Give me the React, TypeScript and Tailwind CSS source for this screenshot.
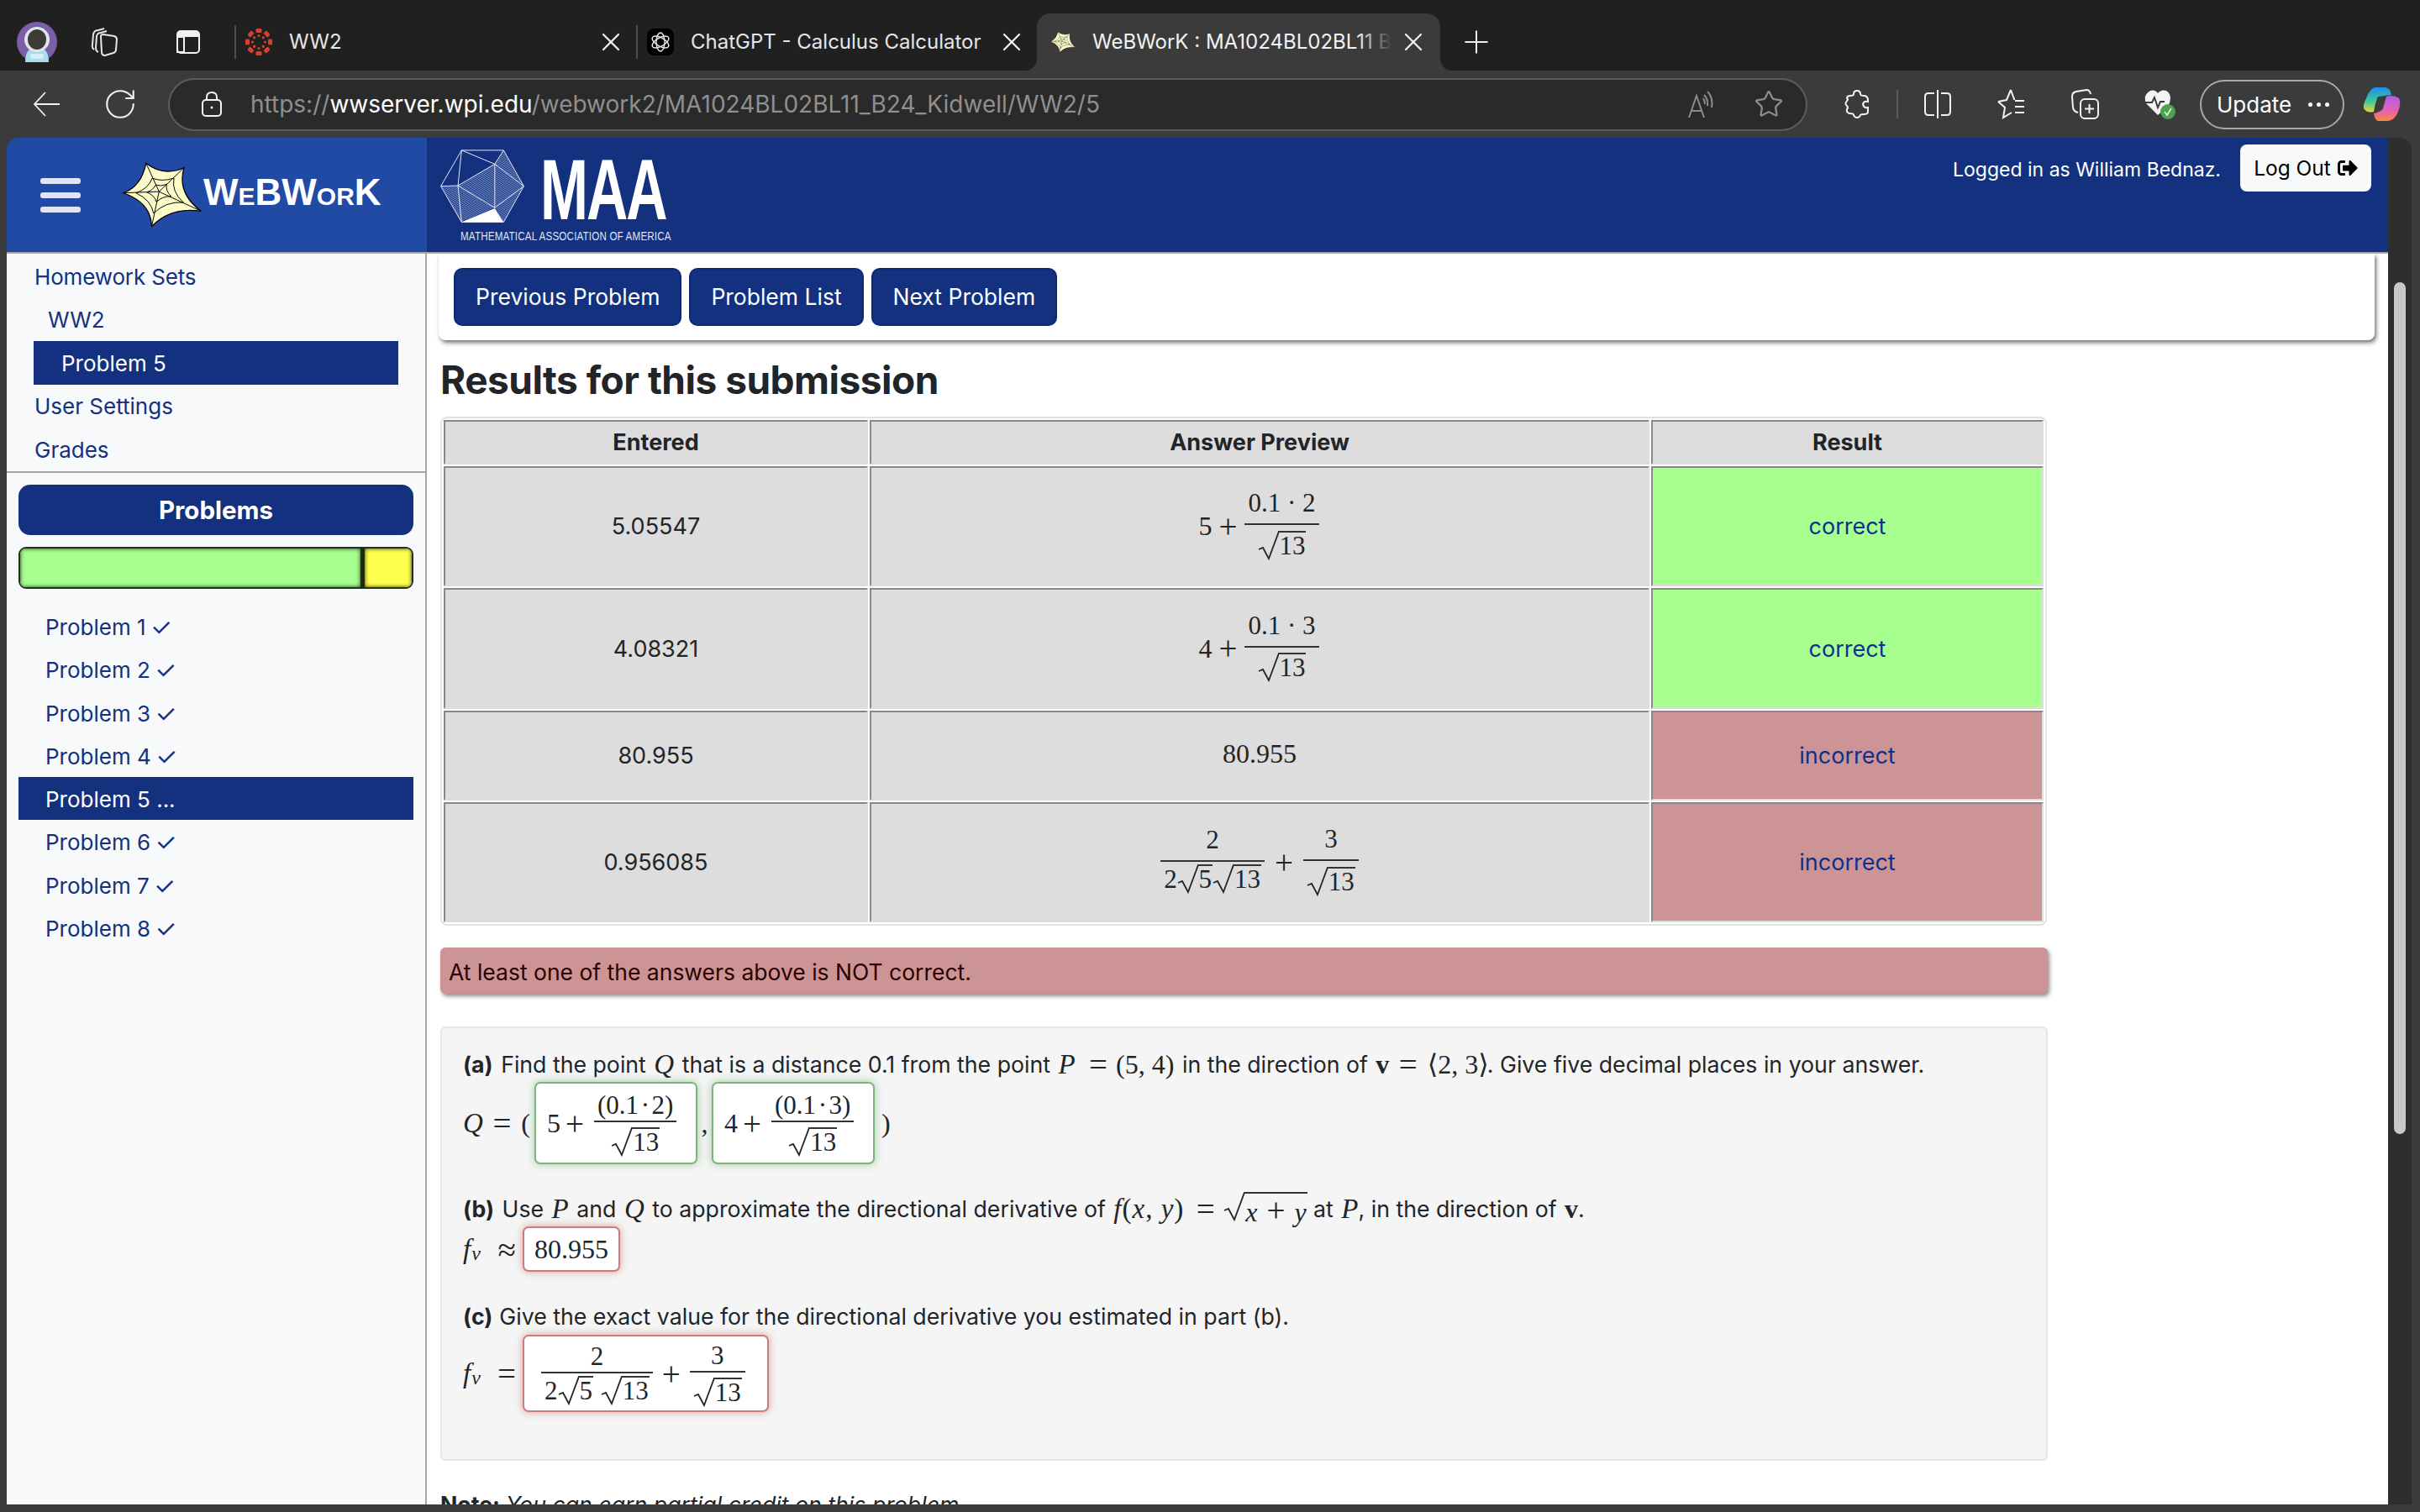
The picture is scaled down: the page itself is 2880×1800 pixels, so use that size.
import type { ReactNode } from "react"
import { Plus, RotateCw, Star, X } from "lucide-react"
import { FaSignOutAlt } from "react-icons/fa"

const BLUE = "text-[#13317f]"
const SERIF = "font-['Liberation_Serif','DejaVu_Serif',serif]"

function V({ children }: { children: ReactNode }) {
  return <span className={`${SERIF} italic text-[33px] leading-none`}>{children}</span>
}

function M({ children, className = "" }: { children: ReactNode; className?: string }) {
  return <span className={`${SERIF} text-[32px] leading-none whitespace-pre ${className}`}>{children}</span>
}

// + and = are wider in the math font of the page
function Op({ children, className = "" }: { children: ReactNode; className?: string }) {
  return <span className={`${SERIF} text-[39px] leading-none font-normal ${className}`}>{children}</span>
}

function Sqrt({ children, size = 31 }: { children: ReactNode; size?: number }) {
  const h = Math.round(size * 1.14)
  return (
    <span className="inline-flex items-start align-middle">
      <svg width={h * 0.74} height={h} viewBox="0 0 26 35" className="shrink-0" preserveAspectRatio="none">
        <path d="M1 22 L6 20 L13 33 L25 1 H26" fill="none" stroke="currentColor" strokeWidth="1.8" />
      </svg>
      <span className="border-t-[2px] border-[#333] leading-[32px] pr-[1px]">{children}</span>
    </span>
  )
}

function Frac({ top, bottom, loose = false }: { top: ReactNode; bottom: ReactNode; loose?: boolean }) {
  return (
    <span className={`inline-flex flex-col items-center align-middle ${SERIF} text-[31px]`}>
      <span className={`leading-[37px] whitespace-pre px-[4px] ${loose ? "pb-[6px]" : ""}`}>{top}</span>
      <span className="w-full border-t-[2px] border-[#333]" />
      <span className={`leading-[37px] whitespace-pre px-[4px] pt-[2px] ${loose ? "pb-[6px]" : ""}`}>{bottom}</span>
    </span>
  )
}

function AnswerBox({ ok, className, children }: { ok: boolean; className: string; children: ReactNode }) {
  const tone = ok
    ? "border-[#7db37d] shadow-[0_0_10px_rgba(70,160,70,0.5)]"
    : "border-[#c87c7c] shadow-[0_0_10px_rgba(190,70,70,0.5)]"
  return (
    <span className={`inline-flex items-center bg-white border-[2px] rounded-[7px] shrink-0 ${tone} ${className}`}>
      {children}
    </span>
  )
}

function Astronaut() {
  return (
    <svg width="48" height="48" viewBox="0 0 48 48" className="shrink-0">
      <circle cx="24" cy="24" r="24" fill="#7c5da8" />
      <path d="M10 48 Q10 30 24 30 Q38 30 38 48 Z" fill="#a9dcea" />
      <circle cx="24" cy="21" r="15" fill="#dfe7ea" />
      <ellipse cx="24" cy="21" rx="11" ry="12" fill="#3e3a36" />
      <rect x="16" y="38" width="16" height="6" rx="2" fill="#d5eef5" />
    </svg>
  )
}

function TabsIcon() {
  return (
    <svg width="33" height="34" viewBox="0 0 33 34" fill="none" stroke="#e6e6e6" strokeWidth="2" className="shrink-0">
      <path d="M4 26 Q1 24 2 20 L3 8 Q4 3 9 3 L16 1" />
      <path d="M9 29 Q6 28 6 24 L7 10 Q8 6 12 6 L19 4" />
      <path d="M12 10 Q12 8 15 8 L28 10 Q31 11 31 14 L30 26 Q30 29 27 30 L17 33 Q13 33 13 29 Z" />
    </svg>
  )
}

function VerticalTabsIcon() {
  return (
    <svg width="28" height="28" viewBox="0 0 28 28" className="shrink-0">
      <rect x="1" y="1" width="26" height="26" rx="4" fill="none" stroke="#f2f2f2" strokeWidth="2" />
      <path d="M1 5 Q1 1 5 1 H23 Q27 1 27 5 V8 H1 Z" fill="#f2f2f2" />
      <rect x="1" y="8" width="8" height="18" fill="none" stroke="#f2f2f2" strokeWidth="2" />
    </svg>
  )
}

function CanvasIcon() {
  const dots = [0, 45, 90, 135, 180, 225, 270, 315]
  return (
    <svg width="32" height="32" viewBox="-16 -16 32 32" className="shrink-0">
      {dots.map((a) => (
        <g key={a} transform={`rotate(${a})`}>
          <rect x="-3.5" y="-16" width="7" height="5" rx="1.5" fill="#d6402d" />
          <circle cx="0" cy="-7.5" r="1.6" fill="#d6402d" />
        </g>
      ))}
    </svg>
  )
}

function ChatGptIcon() {
  return (
    <svg width="32" height="32" viewBox="-16 -16 32 32" className="shrink-0">
      <rect x="-16" y="-16" width="32" height="32" rx="8" fill="#000" />
      {[0, 60, 120].map((a) => (
        <ellipse key={a} rx="5" ry="11" transform={`rotate(${a})`} fill="none" stroke="#e8e8e8" strokeWidth="1.4" />
      ))}
    </svg>
  )
}

function WebStar({ size = 97 }: { size?: number }) {
  return (
    <svg width={size} height={size * 0.825} viewBox="40 78 300 248" className="shrink-0">
      <path
        d="M48 195 Q115 170 132 85 Q195 135 272 102 Q245 195 335 262 Q225 245 153 318 Q150 230 48 195 Z"
        fill="#fdfcc8"
        stroke="#000"
        strokeWidth="4"
      />
      <g fill="none" stroke="#000" strokeWidth="3">
        <path d="M180 190 L132 85 M180 190 L272 102 M180 190 L335 262 M180 190 L153 318 M180 190 L48 195" />
        <path d="M155 140 Q190 155 235 140 Q225 190 270 230 Q205 225 160 270 Q150 220 95 195 Q140 180 155 140 Z" />
        <path d="M168 165 Q185 172 208 163 Q203 187 225 208 Q195 205 170 228 Q165 205 135 192 Q158 185 168 165 Z" />
      </g>
    </svg>
  )
}

function MaaMark() {
  return (
    <svg width="102" height="90" viewBox="40 38 310 270" className="shrink-0">
      <defs>
        <pattern id="hatch" width="5" height="5" patternUnits="userSpaceOnUse" patternTransform="rotate(25)">
          <rect width="5" height="5" fill="#13317f" />
          <rect width="5" height="2" fill="#8ea3d3" />
        </pattern>
      </defs>
      <path d="M107 170 L240 92 L345 172 L272 302 L240 250 Z" fill="url(#hatch)" />
      <path d="M45 172 L107 170 L240 250 L120 302 Z" fill="url(#hatch)" />
      <path d="M240 92 L272 42 L345 172 Z" fill="url(#hatch)" />
      <path d="M120 302 L240 252 L272 302 Z" fill="#fff" />
      <g fill="none" stroke="#e6ebf7" strokeWidth="3">
        <path d="M120 42 H272 L345 172 L272 302 H120 L45 172 Z" />
        <path d="M120 42 L240 92 L272 42 M240 92 L345 172 M240 92 L240 250 L345 172 M240 92 L107 170 L240 250 M120 42 L107 170 L45 172 M107 170 L120 302" />
      </g>
    </svg>
  )
}

function BackIcon() {
  return (
    <svg width="32" height="30" viewBox="0 0 32 30" fill="none" stroke="#f2f2f2" strokeWidth="1.8" className="shrink-0">
      <path d="M32 15 H2 M15 1 L2 15 L15 29" />
    </svg>
  )
}

function LockIcon() {
  return (
    <svg width="24" height="30" viewBox="0 0 24 30" fill="none" stroke="#f2f2f2" strokeWidth="2" className="shrink-0">
      <rect x="1" y="10" width="22" height="19" rx="4" />
      <path d="M6 10 V7 Q6 1 12 1 Q18 1 18 7 V10" />
      <circle cx="12" cy="19" r="1.5" fill="#f2f2f2" stroke="none" />
    </svg>
  )
}

function ReadAloudIcon() {
  return (
    <svg width="34" height="36" viewBox="0 0 34 36" fill="none" stroke="#8c8c8c" strokeWidth="2" className="shrink-0">
      <path d="M2 34 L11 8 L20 34 M5 26 H17" />
      <path d="M20 7 Q25 12 24 20 M24 3 Q31 10 29 22 M19 11 Q21 14 21 18" />
    </svg>
  )
}

function PuzzleIcon() {
  return (
    <svg width="30" height="34" viewBox="0 0 30 34" fill="none" stroke="#f2f2f2" strokeWidth="2" className="shrink-0">
      <path d="M11 5 Q11 1 15 1 Q19 1 19 5 Q19 7 24 7 Q28 8 28 12 V14 Q23 13 22 17 Q23 22 28 21 V26 Q28 29 23 29 Q19 29 19 30 Q18 33 15 33 Q12 33 11 30 Q11 28 6 28 Q2 27 3 23 Q5 21 3 19 Q0 17 3 13 Q5 11 3 10 Q3 7 7 7 Q11 7 11 5 Z" />
    </svg>
  )
}

function SplitIcon() {
  return (
    <svg width="32" height="36" viewBox="0 0 32 36" fill="none" stroke="#f2f2f2" strokeWidth="2" className="shrink-0">
      <path d="M16 1 V35" />
      <path d="M12 5 H5 Q1 5 1 9 V27 Q1 31 5 31 H12 M20 5 H27 Q31 5 31 9 V27 Q31 31 27 31 H20" />
    </svg>
  )
}

function FavoritesIcon() {
  return (
    <svg width="34" height="36" viewBox="0 0 34 36" fill="none" stroke="#f2f2f2" strokeWidth="2" className="shrink-0">
      <path d="M16 1 L20 12 H21 M1 15 L11 13 L16 1 M1 15 L9 22 L7 34 L17 28" />
      <path d="M21 14 H32 M21 21 H32 M21 28 H32" />
    </svg>
  )
}

function CollectionsIcon() {
  return (
    <svg width="34" height="36" viewBox="0 0 34 36" fill="none" stroke="#f2f2f2" strokeWidth="2" className="shrink-0">
      <path d="M8 28 Q3 27 2 22 L1 9 Q1 4 6 3 L18 1 Q22 1 23 6" />
      <rect x="11" y="12" width="21" height="23" rx="5" />
      <path d="M21.5 18 V29 M16 23.5 H27" />
    </svg>
  )
}

function HealthIcon() {
  return (
    <svg width="38" height="38" viewBox="0 0 38 38" className="shrink-0">
      <path d="M17 32 L3 18 Q-1 8 8 3 Q14 1 17 6 Q21 1 27 3 Q35 8 30 20 Z" fill="#f4f4f4" />
      <path d="M0 17 H10 L13 11 L17 23 L20 16 H25" fill="none" stroke="#3b3b3b" strokeWidth="2" />
      <circle cx="29" cy="28" r="9" fill="#4ea24e" />
      <path d="M25 28 L28 32 L33 24" fill="none" stroke="#dff3df" strokeWidth="1.6" />
    </svg>
  )
}

function CopilotIcon() {
  return (
    <svg width="46" height="42" viewBox="0 0 46 42" className="shrink-0">
      <defs>
        <linearGradient id="cpa" x1="0" y1="0" x2="0" y2="1">
          <stop offset="0" stopColor="#1f8fe8" />
          <stop offset="0.55" stopColor="#38c8a0" />
          <stop offset="1" stopColor="#f4d23c" />
        </linearGradient>
        <linearGradient id="cpb" x1="0" y1="0" x2="0" y2="1">
          <stop offset="0" stopColor="#b060e8" />
          <stop offset="0.6" stopColor="#e860b0" />
          <stop offset="1" stopColor="#f58a3c" />
        </linearGradient>
      </defs>
      <path d="M14 1 H27 Q33 2 34 10 L18 12 Q15 18 13 30 Q5 32 1 26 Q0 22 4 14 Q8 3 14 1 Z" fill="url(#cpa)" />
      <path d="M28 12 Q36 9 43 14 Q46 20 42 30 Q38 40 30 41 H18 Q14 40 13 32 Q22 30 24 26 Q26 18 28 12 Z" fill="url(#cpb)" />
    </svg>
  )
}

function BrowserTabs() {
  return (
    <div className="h-[84px] bg-[#202020] flex items-center pl-[20px] pt-[16px] shrink-0">
      <Astronaut />
      <div className="ml-[40px]"><TabsIcon /></div>
      <div className="ml-[69px]"><VerticalTabsIcon /></div>
      <div className="ml-[41px] w-[2px] h-[40px] bg-[#4e4e4e]" />
      <div className="w-[476px] flex items-center pl-[11px] pr-[12px]">
        <CanvasIcon />
        <span className="ml-[20px] text-[24px] text-[#e6e6e6]">WW2</span>
        <X className="ml-auto text-[#eee]" size={36} strokeWidth={1.5} />
      </div>
      <div className="w-[2px] h-[40px] bg-[#4e4e4e]" />
      <div className="w-[475px] flex items-center pl-[11px] pr-[12px]">
        <ChatGptIcon />
        <span className="ml-[20px] text-[24px] text-[#e6e6e6] whitespace-nowrap">ChatGPT - Calculus Calculator</span>
        <X className="ml-auto text-[#eee]" size={36} strokeWidth={1.5} />
      </div>
      <div className="relative w-[480px] h-[68px] self-end bg-[#3b3b3b] rounded-t-[16px] flex items-center pl-[15px] pr-[14px]">
        <span className="absolute left-[-14px] bottom-0 w-[14px] h-[14px] bg-[#3b3b3b]">
          <span className="block w-full h-full bg-[#202020] rounded-br-[14px]" />
        </span>
        <span className="absolute right-[-14px] bottom-0 w-[14px] h-[14px] bg-[#3b3b3b]">
          <span className="block w-full h-full bg-[#202020] rounded-bl-[14px]" />
        </span>
        <WebStar size={32} />
        <span className="relative ml-[19px] w-[356px] overflow-hidden whitespace-nowrap text-[24px] text-[#f2f2f2]">
          WeBWorK : MA1024BL02BL11 B24 Kidwell : WW2 : 5
          <span className="absolute right-0 top-0 bottom-0 w-[40px] bg-linear-to-r from-transparent to-[#3b3b3b]" />
        </span>
        <X className="ml-auto text-[#eee]" size={36} strokeWidth={1.5} />
      </div>
      <Plus className="ml-[21px] text-[#eee]" size={44} strokeWidth={1.1} />
    </div>
  )
}

function ToolSlot({ children }: { children: ReactNode }) {
  return <div className="w-[88px] flex justify-center items-center shrink-0">{children}</div>
}

function BrowserToolbar() {
  return (
    <div className="h-[80px] bg-[#3b3b3b] flex items-center pl-[39px] shrink-0">
      <BackIcon />
      <RotateCw className="ml-[51px] text-[#f2f2f2]" size={42} strokeWidth={1.2} />
      <div className="ml-[36px] w-[1951px] h-[63px] rounded-full bg-[#2a2a2a] border-[2px] border-[#5c5c5c] flex items-center pl-[38px] pr-[26px]">
        <LockIcon />
        <span className="ml-[34px] text-[28px] text-[#8f8f8f] whitespace-nowrap">
          https://<span className="text-white">wwserver.wpi.edu</span>/webwork2/MA1024BL02BL11_B24_Kidwell/WW2/5
        </span>
        <div className="ml-auto flex items-center gap-[45px]">
          <ReadAloudIcon />
          <Star className="text-[#8c8c8c]" size={36} strokeWidth={1.5} />
        </div>
      </div>
      <div className="ml-[15px] flex items-center">
        <ToolSlot><PuzzleIcon /></ToolSlot>
        <div className="w-[2px] h-[34px] ml-[3px] mr-[3px] bg-[#5c5c5c]" />
        <ToolSlot><SplitIcon /></ToolSlot>
        <ToolSlot><FavoritesIcon /></ToolSlot>
        <ToolSlot><CollectionsIcon /></ToolSlot>
        <ToolSlot><HealthIcon /></ToolSlot>
        <div className="ml-[4px] w-[172px] h-[59px] rounded-full border-[2px] border-[#a8a8a8] flex items-center pl-[18px] text-[26px] text-white">
          Update
          <span className="ml-[20px] flex gap-[5px]">
            <i className="w-[5px] h-[5px] rounded-full bg-white" />
            <i className="w-[5px] h-[5px] rounded-full bg-white" />
            <i className="w-[5px] h-[5px] rounded-full bg-white" />
          </span>
        </div>
        <div className="ml-[22px]"><CopilotIcon /></div>
      </div>
    </div>
  )
}

function PageHeader() {
  return (
    <header className="h-[138px] flex shrink-0 border-b-[2px] border-[#a6a6a6]">
      <div className="w-[500px] bg-[#214aa5] rounded-tl-[14px] flex items-center pl-[40px] shrink-0">
        <div className="flex flex-col gap-[10px]">
          <span className="block w-[48px] h-[7px] rounded-[3px] bg-[#dfe5f5]" />
          <span className="block w-[48px] h-[7px] rounded-[3px] bg-[#dfe5f5]" />
          <span className="block w-[48px] h-[7px] rounded-[3px] bg-[#dfe5f5]" />
        </div>
        <div className="ml-[48px]"><WebStar /></div>
        <span className="ml-[1px] mb-[6px] font-['Liberation_Sans',sans-serif] font-bold text-white text-[44px] leading-none whitespace-nowrap">
          W<span className="text-[30px]">E</span>BW<span className="text-[30px]">OR</span>K
        </span>
      </div>
      <div className="flex-1 bg-[#13317f] flex items-start pl-[15px] pr-[20px]">
        <div className="flex flex-col mt-[13px]">
          <div className="flex items-start">
            <MaaMark />
            <span className="ml-[18px] mt-[9px] w-[146px] h-[80px] font-['Liberation_Sans',sans-serif] font-bold text-white text-[102px] leading-[80px] tracking-[-3px] scale-x-[0.67] origin-left whitespace-nowrap">
              MAA
            </span>
          </div>
          <span className="ml-[25px] mt-[5px] font-['Liberation_Sans',sans-serif] text-[#dfe5f5] text-[14px] leading-[18px] tracking-[0.2px] scale-x-[0.83] origin-left whitespace-nowrap">
            MATHEMATICAL ASSOCIATION OF AMERICA
          </span>
        </div>
        <div className="ml-auto flex items-center mt-[8px]">
          <span className="text-[23px] text-white mt-[5px]">Logged in as William Bednaz.</span>
          <button className="ml-[23px] w-[156px] h-[56px] bg-[#f8f9fa] rounded-[8px] flex items-center justify-center gap-[8px] text-[24.5px] text-black">
            Log Out <FaSignOutAlt size={24} />
          </button>
        </div>
      </div>
    </header>
  )
}

const NAV_CLASS = "h-[51.5px] flex items-center pt-[1px] text-[26px]"

function Sidebar() {
  const problems = ["Problem 1", "Problem 2", "Problem 3", "Problem 4", "Problem 5", "Problem 6", "Problem 7", "Problem 8"]
  return (
    <aside className={`w-[500px] shrink-0 bg-[#f8f9fa] border-r-[2px] border-[#a6a6a6] ${BLUE}`}>
      <nav className="pt-[1px] pb-[0.5px] border-b-[2px] border-[#a6a6a6]">
        <div className={`${NAV_CLASS} pl-[33px] tracking-[-0.15px]`}>Homework Sets</div>
        <div className={`${NAV_CLASS} pl-[49px]`}>WW2</div>
        <div className="pl-[32px] pr-[32px]">
          <div className={`${NAV_CLASS} pl-[33px] bg-[#13317f] text-white`}>Problem 5</div>
        </div>
        <div className={`${NAV_CLASS} pl-[33px]`}>User Settings</div>
        <div className={`${NAV_CLASS} pl-[33px]`}>Grades</div>
      </nav>
      <div className="px-[14px] pt-[14px]">
        <div className="h-[60px] rounded-[14px] bg-[#13317f] text-white font-bold text-[29.5px] flex items-center justify-center">
          Problems
        </div>
        <div className="mt-[14px] h-[50px] rounded-[9px] border-[2px] border-[#23301c] flex overflow-hidden">
          <div className="flex-[408] bg-[#a6ff8f] border-r-[5px] border-[#1e2a18] shadow-[inset_0_0_5px_#1e2a18]" />
          <div className="flex-[56] bg-[#ffff4d] shadow-[inset_0_0_5px_#2a2a10]" />
        </div>
        <ul className="mt-[19px]">
          {problems.map((p, i) => (
            <li
              key={p}
              className={`h-[51.25px] flex items-center pl-[32px] pt-[2px] text-[26px] whitespace-pre ${i === 4 ? "bg-[#13317f] text-white" : ""}`}
            >
              {p} {i === 4 ? "..." : <span className="text-[29px] leading-none ml-[-2px]">✓</span>}
            </li>
          ))}
        </ul>
      </div>
    </aside>
  )
}

const NAV_BUTTONS = ["Previous Problem", "Problem List", "Next Problem"]

function ResultRow({ entered, preview, ok, height }: { entered: string; preview: ReactNode; ok: boolean; height: string }) {
  const cell = "border-[2px] border-t-[#888] border-l-[#888] border-r-[#ddd] border-b-[#ddd] text-center align-middle"
  return (
    <tr>
      <td className={`${cell} ${height} pt-[2px] bg-[#ddd]`}>{entered}</td>
      <td className={`${cell} ${height} bg-[#ddd]`}>{preview}</td>
      <td className={`${cell} ${height} pt-[2px] text-[#0d2f8f] ${ok ? "bg-[#a6ff8f]" : "bg-[#cc9494]"}`}>{ok ? "correct" : "incorrect"}</td>
    </tr>
  )
}

function ResultsTable() {
  const head = "h-[53px] pt-[2px] border-[2px] border-t-[#888] border-l-[#888] border-r-[#ddd] border-b-[#ddd] bg-[#ddd] font-bold text-center"
  const preview = (lead: string, num: string) => (
    <span className="inline-flex items-center ml-[-2px]">
      <M>{lead}</M>
      <Op className="ml-[8px] mr-[9px]">+</Op>
      <Frac loose top={num} bottom={<Sqrt>13</Sqrt>} />
    </span>
  )
  return (
    <table className="mt-[19px] w-[1912px] table-fixed border-separate border-spacing-[2px] border-[2px] border-[#e2e2e2] rounded-[8px] text-[27px] text-[#212529]">
      <colgroup>
        <col className="w-[505px]" />
        <col className="w-[928px]" />
        <col className="w-[467px]" />
      </colgroup>
      <thead>
        <tr>
          <th className={head}>Entered</th>
          <th className={head}>Answer Preview</th>
          <th className={head}>Result</th>
        </tr>
      </thead>
      <tbody>
        <ResultRow entered="5.05547" ok height="h-[143px]" preview={preview("5", "0.1 · 2")} />
        <ResultRow entered="4.08321" ok height="h-[144px]" preview={preview("4", "0.1 · 3")} />
        <ResultRow entered="80.955" ok={false} height="h-[107px]" preview={<M>80.955</M>} />
        <ResultRow
          entered="0.956085"
          ok={false}
          height="h-[143px]"
          preview={
            <span className="inline-flex items-center gap-[12px]">
              <Frac loose top="2" bottom={<span className="inline-flex items-center">2<Sqrt>5</Sqrt><Sqrt>13</Sqrt></span>} />
              <Op>+</Op>
              <Frac loose top="3" bottom={<Sqrt>13</Sqrt>} />
            </span>
          }
        />
      </tbody>
    </table>
  )
}

function ProblemBox() {
  const Line = ({ children, className = "" }: { children: ReactNode; className?: string }) => (
    <p className={`h-[44px] flex items-center gap-[9.5px] whitespace-pre ${className}`}>{children}</p>
  )
  return (
    <section className="mt-[39px] h-[517px] bg-[#f5f5f5] border-[2px] border-[#e6e6e6] rounded-[6px] pl-[25px] pt-[21px] text-[26.7px] text-[#212529]">
      <Line>
        <b>(a)</b><span>Find the point</span><V>Q</V><span>that is a distance 0.1 from the point</span><V>P</V>
        <Op className="ml-[7px]">=</Op><M className="ml-[0.5px]">(5, 4)</M><span>in the direction of</span><M className="font-bold">v</M><Op className="ml-[2px]">=</Op><M className="ml-[2.5px]">⟨2, 3⟩</M><span className="ml-[-11.5px]">. Give five decimal places in your answer.</span>
      </Line>
      <div className="flex items-center h-[98px] mt-[-1px]">
        <span className="w-[85px] flex items-center justify-between pr-[5px] shrink-0">
          <V>Q</V>
          <Op>=</Op>
          <M>(</M>
        </span>
        <AnswerBox ok className="w-[194px] h-[98px] pl-[13px] gap-[6px]">
          <M>5</M><Op>+</Op>
          <span className="ml-[6px]"><Frac top={"(0.1\u200a·\u200a2)"} bottom={<Sqrt>13</Sqrt>} /></span>
        </AnswerBox>
        <M className="w-[17px] text-center">,</M>
        <AnswerBox ok className="w-[194px] h-[98px] pl-[13px] gap-[6px]">
          <M>4</M><Op>+</Op>
          <span className="ml-[6px]"><Frac top={"(0.1\u200a·\u200a3)"} bottom={<Sqrt>13</Sqrt>} /></span>
        </AnswerBox>
        <M className="ml-[8px]">)</M>
      </div>
      <Line className="mt-[31px]">
        <b>(b)</b><span>Use</span><V>P</V><span>and</span><V>Q</V><span>to approximate the directional derivative of</span>
        <span className={`${SERIF} text-[33px] leading-none tracking-[1px]`}><i>f</i>(<i>x</i>, <i>y</i>)</span>
        <Op className="ml-[5px]">=</Op>
        <span className={`${SERIF} text-[32px] leading-none ml-[1px]`}><Sqrt><i>x</i> <span className="text-[39px] leading-none mx-[3px]">+</span> <i>y</i></Sqrt></span>
        <span className="ml-[-2px]">at</span><V>P</V><span className="ml-[-9.5px]">, in the direction of</span><M className="font-bold">v</M><span className="ml-[-9.5px]">.</span>
      </Line>
      <div className="flex items-center h-[54px] mt-[-1px]">
        <span className="w-[71px] flex items-center pr-[8px] shrink-0">
          <V>f</V><span className={`${SERIF} italic text-[24px] leading-none mt-[10px] ml-[1px]`}>v</span>
          <Op className="ml-auto">≈</Op>
        </span>
        <AnswerBox ok={false} className="w-[116px] h-[54px] justify-center">
          <M>80.955</M>
        </AnswerBox>
      </div>
      <Line className="mt-[31px]">
        <b>(c)</b><span className="ml-[-1.5px]">Give the exact value for the directional derivative you estimated in part (b).</span>
      </Line>
      <div className="flex items-center h-[92px]">
        <span className="w-[71px] flex items-center pr-[8px] shrink-0">
          <V>f</V><span className={`${SERIF} italic text-[24px] leading-none mt-[10px] ml-[1px]`}>v</span>
          <Op className="ml-auto">=</Op>
        </span>
        <AnswerBox ok={false} className="w-[293px] h-[92px] pl-[20px] gap-[11px]">
          <Frac top="2" bottom={<span className="inline-flex items-center">2<Sqrt>5</Sqrt><span className="w-[9px]" /><Sqrt>13</Sqrt></span>} />
          <Op>+</Op>
          <Frac top="3" bottom={<Sqrt>13</Sqrt>} />
        </AnswerBox>
      </div>
    </section>
  )
}

function MainContent() {
  return (
    <main className="flex-1 min-w-0 pl-[16px] pr-[16px] overflow-hidden bg-white">
      <div className="ml-[-2px] h-[103px] bg-white rounded-b-[8px] shadow-[2px_3px_5px_rgba(0,0,0,0.55)] flex items-center pl-[18px] gap-[9px]">
        {NAV_BUTTONS.map((label) => (
          <button
            key={label}
            className="h-[69px] px-[24px] rounded-[10px] bg-[#13317f] border-[2px] border-[#0f2a70] text-white text-[26.5px] whitespace-nowrap"
          >
            {label}
          </button>
        ))}
      </div>
      <h1 className="mt-[22px] h-[50px] flex items-center font-bold text-[46px] tracking-[-0.5px] text-[#212529] whitespace-nowrap">
        Results for this submission
      </h1>
      <ResultsTable />
      <div className="mt-[26px] w-[1913px] h-[55px] bg-[#cc9494] rounded-[6px] shadow-[2px_3px_5px_rgba(0,0,0,0.45)] flex items-center pl-[10px] pt-[4px] text-[26.5px] text-[#2b0000]">
        At least one of the answers above is NOT correct.
      </div>
      <div className="w-[1913px]"><ProblemBox /></div>
      <p className="mt-[32px] h-[40px] flex items-center gap-[7px] text-[26.7px] text-[#212529] whitespace-pre">
        <b>Note:</b><i>You can earn partial credit on this problem.</i>
      </p>
    </main>
  )
}

export default function App() {
  return (
    <div className="w-[2880px] h-[1800px] overflow-hidden flex flex-col bg-[#3b3b3b] font-['Inter',sans-serif]">
      <BrowserTabs />
      <BrowserToolbar />
      <div className="h-[1627px] flex pl-[8px] pr-[10px] shrink-0">
        <div className="flex-1 min-w-0 flex flex-col overflow-hidden">
          <PageHeader />
          <div className="flex-1 flex min-h-0">
            <Sidebar />
            <MainContent />
          </div>
        </div>
        <div className="w-[28px] bg-[#2e2e2e] rounded-tr-[14px] pt-[172px] flex justify-center">
          <div className="w-[14px] h-[1014px] rounded-full bg-[#c8c8c8]" />
        </div>
      </div>
    </div>
  )
}
